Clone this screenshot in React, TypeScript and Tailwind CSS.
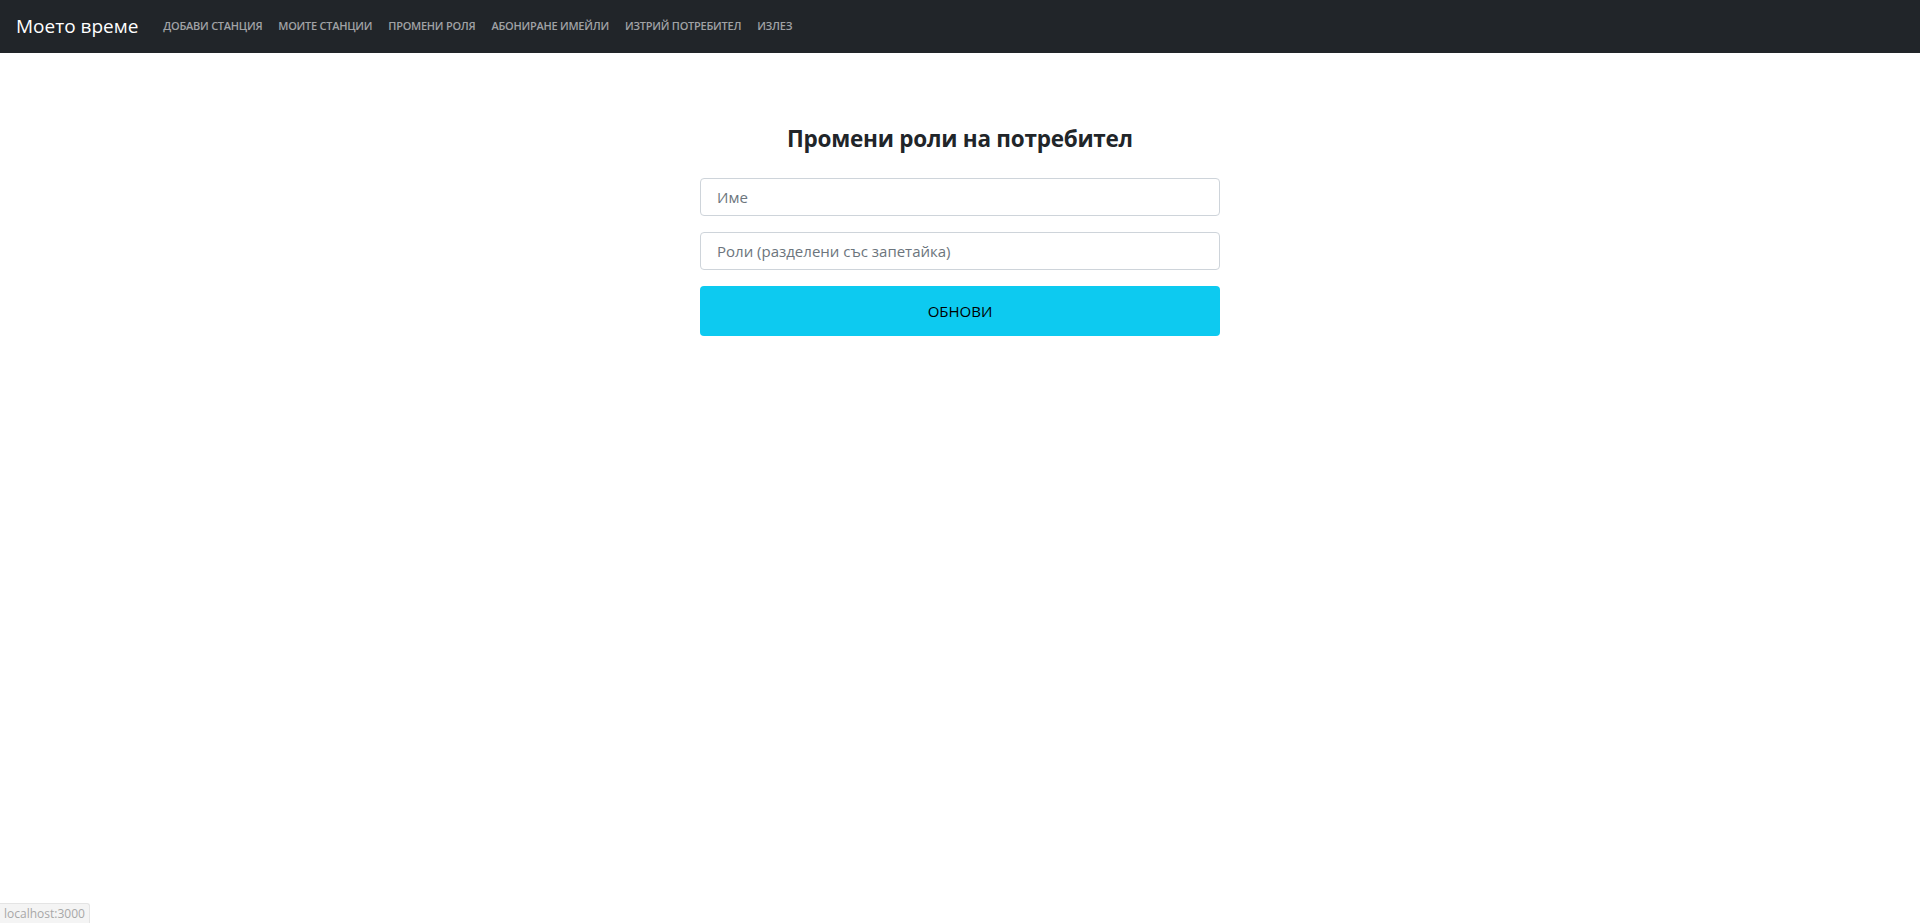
const navLinks = ['Добави станция', 'Моите станции', 'Промени роля', 'Абониране имейли', 'Изтрий потребител', 'Излез']

const App = () => {
  return (
    <div className="min-h-screen bg-white font-['Open_Sans',sans-serif] text-[#212529]">
      {/* Navbar */}
      <nav className="h-[53px] bg-[#212529] flex items-center px-4">
        <a href="#" className="text-white text-[19px] leading-none mr-[17px] -mt-[1px]">
          Моето време
        </a>
        <ul className="flex items-center">
          {navLinks.map((link) => (
            <li key={link}>
              <a href="#" className="block px-2 text-[11px] font-semibold uppercase text-[#a0a2a5] tracking-[-0.25px]">
                {link}
              </a>
            </li>
          ))}
        </ul>
      </nav>

      {/* Form */}
      <div className="flex justify-center">
        <div className="w-[520px] pt-[71px]">
          <h2 className="text-[22.5px] font-bold text-center leading-[30px] mb-[24px] tracking-[-0.25px]">
            Промени роли на потребител
          </h2>
          <div className="flex flex-col gap-[16px]">
            <input
              type="text"
              placeholder="Име"
              className="h-[38px] w-full border border-[#ced4da] rounded-[4px] px-4 text-[15px] placeholder:text-[#6c757d] outline-none"
            />
            <input
              type="text"
              placeholder="Роли (разделени със запетайка)"
              className="h-[38px] w-full border border-[#ced4da] rounded-[4px] px-4 text-[15px] placeholder:text-[#6c757d] outline-none"
            />
            <button className="h-[50px] w-full bg-[#0dcaf0] rounded-[4px] text-[15px] text-black uppercase">
              Обнови
            </button>
          </div>
        </div>
      </div>

      <div className="fixed left-0 bottom-0 bg-[#f4f4f4] border-t border-r border-[#e4e4e4] rounded-tr-[3px] px-[4px] h-[20px] flex items-center text-[12px] text-[#a8a8a8]">
        localhost:3000
      </div>
    </div>
  )
}

export default App
